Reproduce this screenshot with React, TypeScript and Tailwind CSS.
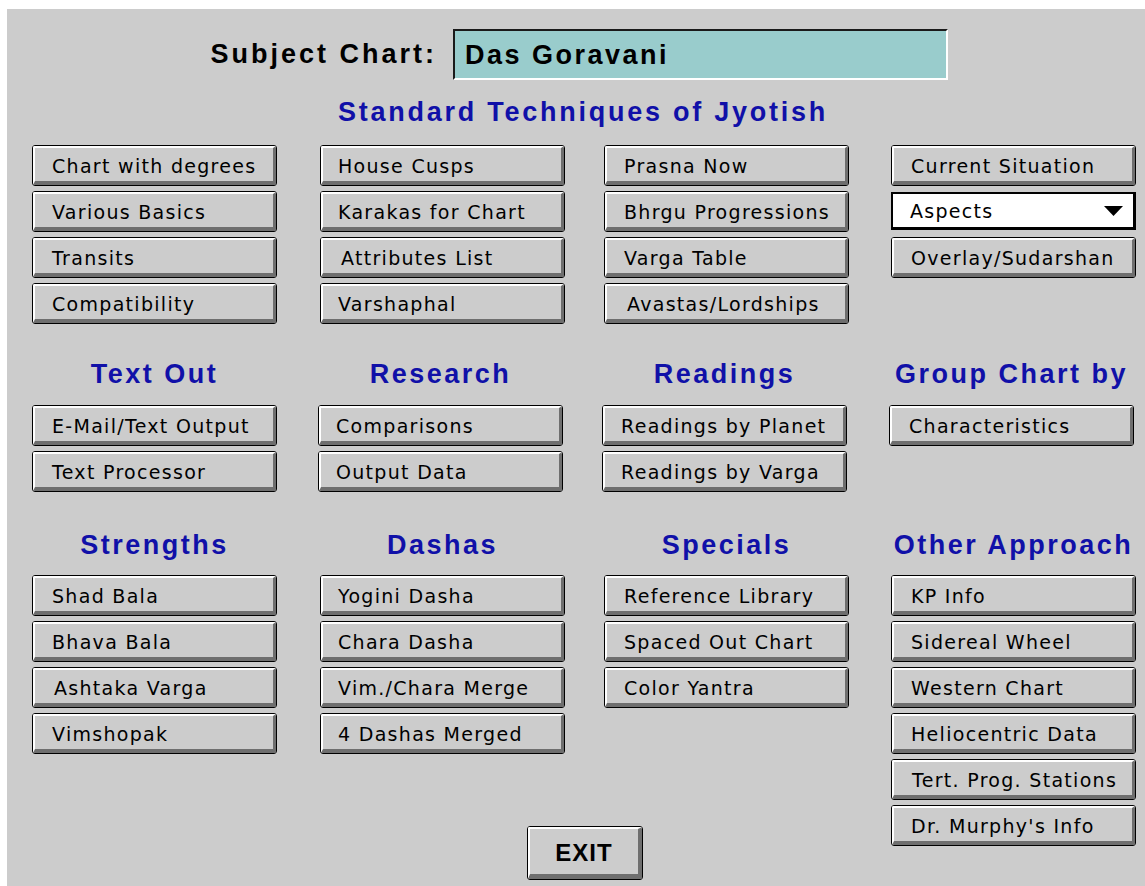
import React from "react";

type BtnProps = { label: string; pad?: string };

function Btn({ label, pad = "pl-[17px]" }: BtnProps) {
  return (
    <div className="h-[41px] w-[245px] shrink-0 rounded-[3px] border border-black bg-[#cccccc]">
      <div
        className={
          "flex h-full w-full items-center whitespace-nowrap rounded-[2px] border-t-2 border-l-2 border-r-[3px] border-b-[4px] border-t-white border-l-white border-r-[#6e6e6e] border-b-[#6e6e6e] pt-[3px] font-['DejaVu_Sans',sans-serif] text-[19px] tracking-[1.3px] text-black " +
          pad
        }
      >
        {label}
      </div>
    </div>
  );
}

function Dropdown({ label }: { label: string }) {
  return (
    <div className="mt-[1px] mb-[2px] flex h-[38px] w-[245px] shrink-0 items-center justify-between border-2 border-r-[3px] border-b-[3px] border-black bg-white pl-[17px] pr-[10px] pt-[2px] font-['DejaVu_Sans',sans-serif] text-[19px] tracking-[1.3px] text-black">
      <span>{label}</span>
      <svg width="19" height="10" viewBox="0 0 19 10" className="mb-[2px]">
        <polygon points="0,0 19,0 9.5,10" fill="#000" />
      </svg>
    </div>
  );
}

function Heading({ text }: { text: string }) {
  return (
    <div className="h-[32px] w-[245px] whitespace-nowrap text-center font-['Liberation_Sans',Arial,sans-serif] text-[27px] font-bold leading-[32px] tracking-[2.5px] text-[#1010a8]">
      {text}
    </div>
  );
}

function Col({ children }: { children: React.ReactNode }) {
  return <div className="flex flex-col gap-[5px]">{children}</div>;
}

export default function App() {
  return (
    <div className="h-[886px] w-[1145px] overflow-hidden bg-white pl-[7px] pt-[9px]">
      <div className="h-[877px] w-[1138px] bg-[#cccccc] pl-[25px] pt-[20px]">
        {/* Subject row */}
        <div className="flex h-[51px] items-center">
          <div className="w-[421px] pr-[16px] text-right font-['Liberation_Sans',Arial,sans-serif] text-[27px] font-bold tracking-[3px] text-black">
            Subject Chart:
          </div>
          <div className="flex h-[51px] w-[495px] items-center border-2 border-t-[#1a1a1a] border-l-[#1a1a1a] border-r-white border-b-white bg-[#99cccc] pl-[10px] pt-[1px] font-['Liberation_Sans',Arial,sans-serif] text-[27px] font-bold tracking-[2.5px] text-black">
            Das Goravani
          </div>
        </div>

        {/* Title */}
        <div className="mt-[16px] h-[32px] w-[1102px] text-center font-['Liberation_Sans',Arial,sans-serif] text-[27px] font-bold leading-[32px] tracking-[2.75px] text-[#1010a8]">
          Standard Techniques of Jyotish
        </div>

        {/* Section 1 */}
        <div className="mt-[17px] grid grid-cols-[288px_284px_287px_245px]">
          <Col>
            <Btn label="Chart with degrees" />
            <Btn label="Various Basics" />
            <Btn label="Transits" />
            <Btn label="Compatibility" />
          </Col>
          <Col>
            <Btn label="House Cusps" pad="pl-[15px]" />
            <Btn label="Karakas for Chart" pad="pl-[15px]" />
            <Btn label="Attributes List" pad="pl-[18px]" />
            <Btn label="Varshaphal" pad="pl-[15px]" />
          </Col>
          <Col>
            <Btn label="Prasna Now" />
            <Btn label="Bhrgu Progressions" />
            <Btn label="Varga Table" />
            <Btn label="Avastas/Lordships" pad="pl-[20px]" />
          </Col>
          <Col>
            <Btn label="Current Situation" />
            <Dropdown label="Aspects" />
            <Btn label="Overlay/Sudarshan" />
          </Col>
        </div>

        {/* Section 2 */}
        <div className="mt-[34px] grid grid-cols-[286px_284px_287px_245px]">
          <div className="flex flex-col">
            <Heading text="Text Out" />
            <div className="mt-[15px]">
              <Col>
                <Btn label="E-Mail/Text Output" />
                <Btn label="Text Processor" />
              </Col>
            </div>
          </div>
          <div className="flex flex-col">
            <Heading text="Research" />
            <div className="mt-[15px]">
              <Col>
                <Btn label="Comparisons" pad="pl-[15px]" />
                <Btn label="Output Data" pad="pl-[15px]" />
              </Col>
            </div>
          </div>
          <div className="flex flex-col">
            <Heading text="Readings" />
            <div className="mt-[15px]">
              <Col>
                <Btn label="Readings by Planet" pad="pl-[16px]" />
                <Btn label="Readings by Varga" pad="pl-[16px]" />
              </Col>
            </div>
          </div>
          <div className="flex flex-col">
            <Heading text="Group Chart by" />
            <div className="mt-[15px]">
              <Col>
                <Btn label="Characteristics" />
              </Col>
            </div>
          </div>
        </div>

        {/* Section 3 */}
        <div className="mt-[37px] flex">
          <div className="flex flex-col">
            <div className="grid grid-cols-[288px_284px_287px]">
              <div className="flex flex-col">
                <Heading text="Strengths" />
                <div className="mt-[14px]">
                  <Col>
                    <Btn label="Shad Bala" />
                    <Btn label="Bhava Bala" />
                    <Btn label="Ashtaka Varga" pad="pl-[19px]" />
                    <Btn label="Vimshopak" />
                  </Col>
                </div>
              </div>
              <div className="flex flex-col">
                <Heading text="Dashas" />
                <div className="mt-[14px]">
                  <Col>
                    <Btn label="Yogini Dasha" pad="pl-[15px]" />
                    <Btn label="Chara Dasha" pad="pl-[15px]" />
                    <Btn label="Vim./Chara Merge" pad="pl-[15px]" />
                    <Btn label="4 Dashas Merged" pad="pl-[15px]" />
                  </Col>
                </div>
              </div>
              <div className="flex flex-col">
                <Heading text="Specials" />
                <div className="mt-[14px]">
                  <Col>
                    <Btn label="Reference Library" />
                    <Btn label="Spaced Out Chart" />
                    <Btn label="Color Yantra" />
                  </Col>
                </div>
              </div>
            </div>
            {/* EXIT */}
            <div className="ml-[495px] mt-[72px] h-[54px] w-[116px] rounded-[3px] border border-black bg-[#cccccc]">
              <div className="flex h-full w-full items-center justify-center rounded-[2px] border-t-2 border-l-2 border-r-[4px] border-b-[5px] border-t-white border-l-white border-r-[#6e6e6e] border-b-[#6e6e6e] pt-[3px] font-['Liberation_Sans',Arial,sans-serif] text-[24px] font-bold tracking-[1px] text-black">
                EXIT
              </div>
            </div>
          </div>
          <div className="flex flex-col">
            <Heading text="Other Approach" />
            <div className="mt-[14px]">
              <Col>
                <Btn label="KP Info" />
                <Btn label="Sidereal Wheel" />
                <Btn label="Western Chart" />
                <Btn label="Heliocentric Data" />
                <Btn label="Tert. Prog. Stations" pad="pl-[18px]" />
                <Btn label="Dr. Murphy's Info" />
              </Col>
            </div>
          </div>
        </div>
      </div>
    </div>
  );
}
